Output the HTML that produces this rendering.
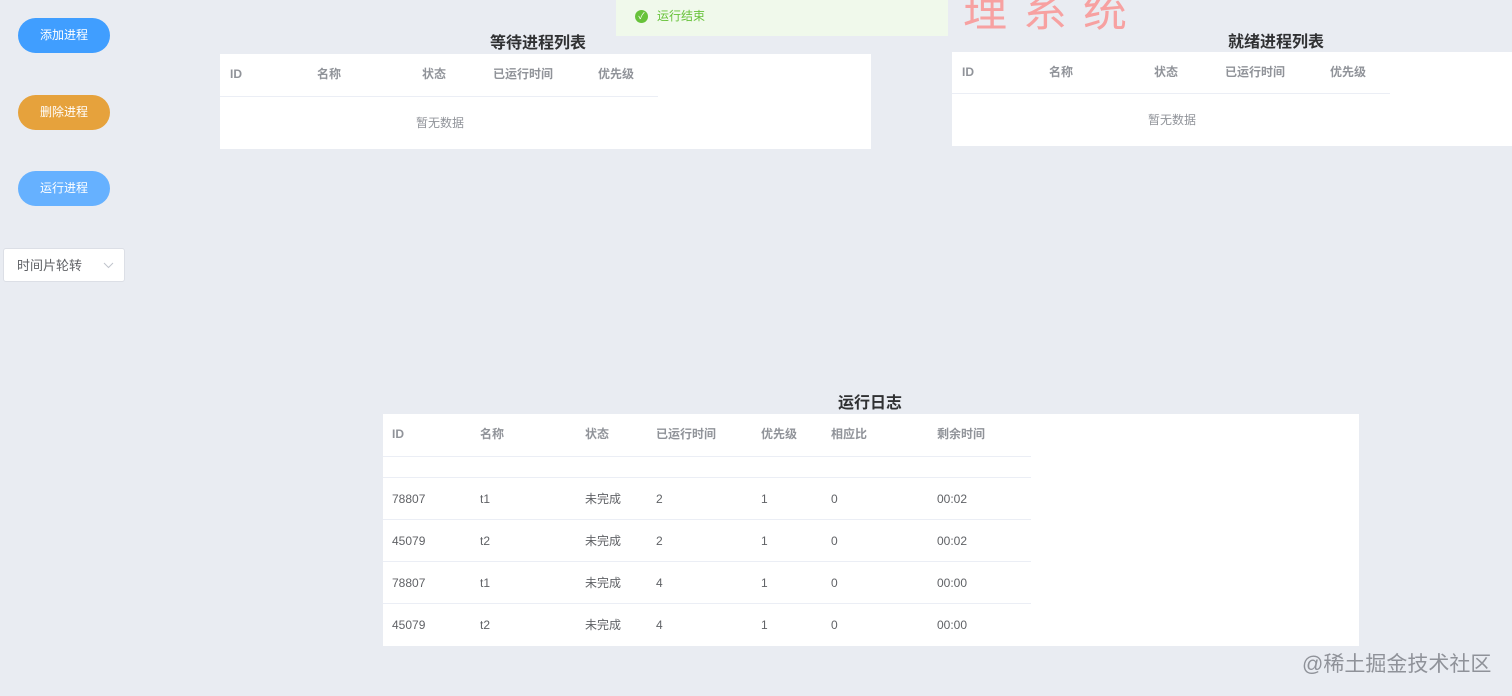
<!DOCTYPE html><html><head><meta charset="utf-8"><style>
body{margin:0;width:1512px;height:696px;background:#e9ecf2;font-family:"Liberation Sans","Noto Sans CJK SC",sans-serif;position:relative;overflow:hidden;font-size:12px;color:#606266}
.a{position:absolute;line-height:16px}
.btn{position:absolute;left:18px;width:92px;height:35px;border-radius:18px;color:#fff;font-size:12px;text-align:center;line-height:35px}
.box{position:absolute;background:#fff}
.h{position:absolute;font-weight:bold;color:#909399;line-height:16px}
.t{position:absolute;font-size:16px;font-weight:bold;color:#303133;line-height:20px}
.ln{position:absolute;height:1px;background:#ebeef5;left:0}
</style></head><body>
<div class="btn" style="top:18px;background:#409eff">添加进程</div>
<div class="btn" style="top:95px;background:#e6a23c">删除进程</div>
<div class="btn" style="top:171px;background:#66b1ff">运行进程</div>
<div class="a" style="left:3px;top:248px;width:122px;height:34px;background:#fff;border:1px solid #dcdfe6;box-sizing:border-box;border-radius:3px;line-height:34px;padding-left:13px;color:#606266;font-size:13px">时间片轮转<svg style="position:absolute;right:10px;top:13px" width="11" height="7" viewBox="0 0 11 7"><path d="M1 1l4.5 4.5L10 1" fill="none" stroke="#c0c4cc" stroke-width="1"/></svg></div>
<div class="a" style="left:616px;top:0;width:332px;height:36px;background:#f0f9eb"><div class="a" style="left:19px;top:10px;width:13px;height:13px;border-radius:50%;background:#67c23a;color:#fff;font-size:9px;text-align:center;line-height:13px">✓</div><div class="a" style="left:41px;top:8px;color:#67c23a;font-size:12px">运行结束</div></div>
<div class="a" style="left:963px;top:-10px;font-size:44px;line-height:44px;color:#f7a1a1;letter-spacing:16px">理系统</div>
<div class="t" style="left:490px;top:34px">等待进程列表</div>
<div class="box" style="left:220px;top:54px;width:651px;height:95px">
<div class="h" style="left:10px;top:12px">ID</div><div class="h" style="left:97px;top:12px">名称</div><div class="h" style="left:202px;top:12px">状态</div><div class="h" style="left:273px;top:12px">已运行时间</div><div class="h" style="left:378px;top:12px">优先级</div>
<div class="ln" style="top:42px;width:438px"></div>
<div class="a" style="left:196px;top:61px;color:#909399">暂无数据</div></div>
<div class="t" style="left:1228px;top:33px">就绪进程列表</div>
<div class="box" style="left:952px;top:52px;width:560px;height:94px">
<div class="h" style="left:10px;top:12px">ID</div><div class="h" style="left:97px;top:12px">名称</div><div class="h" style="left:202px;top:12px">状态</div><div class="h" style="left:273px;top:12px">已运行时间</div><div class="h" style="left:378px;top:12px">优先级</div>
<div class="ln" style="top:41px;width:438px"></div>
<div class="a" style="left:196px;top:60px;color:#909399">暂无数据</div></div>
<div class="t" style="left:838px;top:394px">运行日志</div>
<div class="box" style="left:383px;top:414px;width:976px;height:232px">
<div class="h" style="left:9px;top:12px">ID</div><div class="h" style="left:97px;top:12px">名称</div><div class="h" style="left:202px;top:12px">状态</div><div class="h" style="left:273px;top:12px">已运行时间</div><div class="h" style="left:378px;top:12px">优先级</div><div class="h" style="left:448px;top:12px">相应比</div><div class="h" style="left:554px;top:12px">剩余时间</div>
<div class="ln" style="top:42px;width:648px"></div><div class="ln" style="top:63px;width:648px"></div><div class="ln" style="top:105px;width:648px"></div><div class="ln" style="top:147px;width:648px"></div><div class="ln" style="top:189px;width:648px"></div>
<div class="a" style="top:77px;left:9px">78807</div><div class="a" style="top:77px;left:97px">t1</div><div class="a" style="top:77px;left:202px">未完成</div><div class="a" style="top:77px;left:273px">2</div><div class="a" style="top:77px;left:378px">1</div><div class="a" style="top:77px;left:448px">0</div><div class="a" style="top:77px;left:554px">00:02</div>
<div class="a" style="top:119px;left:9px">45079</div><div class="a" style="top:119px;left:97px">t2</div><div class="a" style="top:119px;left:202px">未完成</div><div class="a" style="top:119px;left:273px">2</div><div class="a" style="top:119px;left:378px">1</div><div class="a" style="top:119px;left:448px">0</div><div class="a" style="top:119px;left:554px">00:02</div>
<div class="a" style="top:161px;left:9px">78807</div><div class="a" style="top:161px;left:97px">t1</div><div class="a" style="top:161px;left:202px">未完成</div><div class="a" style="top:161px;left:273px">4</div><div class="a" style="top:161px;left:378px">1</div><div class="a" style="top:161px;left:448px">0</div><div class="a" style="top:161px;left:554px">00:00</div>
<div class="a" style="top:203px;left:9px">45079</div><div class="a" style="top:203px;left:97px">t2</div><div class="a" style="top:203px;left:202px">未完成</div><div class="a" style="top:203px;left:273px">4</div><div class="a" style="top:203px;left:378px">1</div><div class="a" style="top:203px;left:448px">0</div><div class="a" style="top:203px;left:554px">00:00</div>
</div>
<div class="a" style="left:1302px;top:653px;font-size:21px;line-height:24px;color:#8f9299">@稀土掘金技术社区</div>
</body></html>
